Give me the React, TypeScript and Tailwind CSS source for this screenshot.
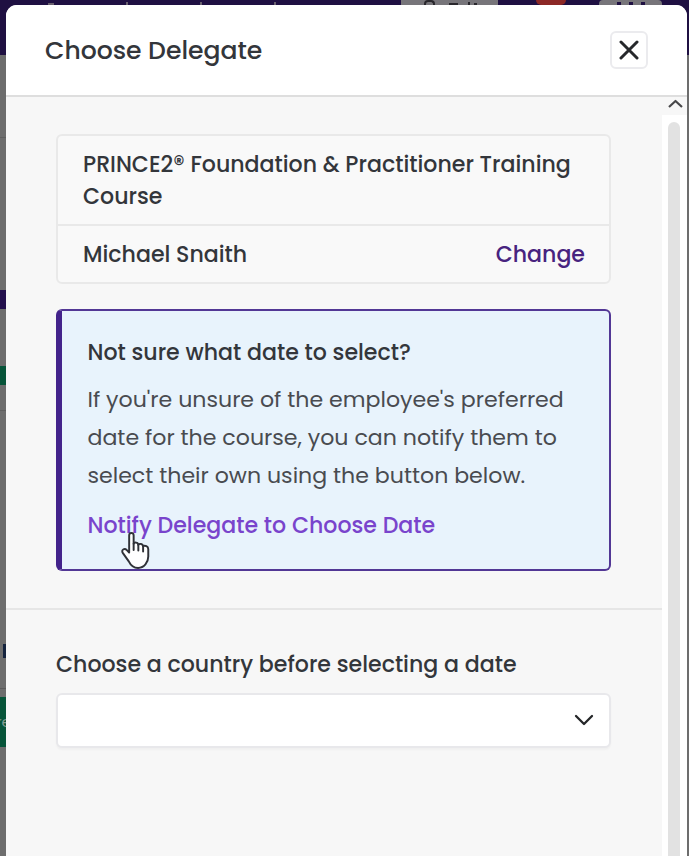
import type { ReactNode } from "react";

function Backdrop() {
  return (
    <div className="h-full w-full bg-[#6d6d6d]">
      <div className="flex h-[55px] items-start overflow-hidden bg-[#1f1042]">
        <div className="ml-[48px] flex h-[5px] w-[298px] items-end gap-[72px]">
          <span className="h-[2px] w-[6px] bg-[#69606f]" />
          <span className="h-[3px] w-[2px] bg-[#69606f]" />
          <span className="h-[3px] w-[2px] bg-[#69606f]" />
          <span className="h-[3px] w-[2px] bg-[#69606f]" />
        </div>
        <div className="ml-[55px] flex h-[5px] w-[97px] items-start bg-[#77757a] pl-[23px]">
          <span className="h-[5px] w-[11px] rounded-t border-2 border-b-0 border-[#29272c]" />
          <span className="mt-[3px] ml-[14px] h-[2px] w-[9px] bg-[#29272c]" />
          <span className="mt-[2px] ml-[10px] h-[3px] w-[2px] bg-[#29272c]" />
          <span className="mt-[3px] ml-[4px] h-[2px] w-[3px] bg-[#29272c]" />
        </div>
        <div className="ml-[38px] h-[5px] w-[30px] rounded-b-full bg-[#8c2826]" />
        <div className="ml-[33px] flex h-[5px] w-[63px] justify-center gap-[8px] rounded-t bg-[#77757a] pt-[2px]">
          <span className="w-[4px] bg-[#1f1042]" />
          <span className="w-[4px] bg-[#1f1042]" />
          <span className="w-[4px] bg-[#1f1042]" />
        </div>
      </div>
      <div className="w-[12px]">
        <div className="h-[83px] border-b border-[#5f5f5f]" />
        <div className="h-[152px]" />
        <div className="h-[19px] bg-[#23104d]" />
        <div className="h-[57px]" />
        <div className="h-[19px] bg-[#065439]" />
        <div className="h-[26px] border-b border-[#5f5f5f]" />
        <div className="h-[233px]" />
        <div className="ml-[3px] h-[14px] w-[8px] bg-[#14233e]" />
        <div className="h-[31px] border-b border-[#5b5b5b]" />
        <div className="h-[8px]" />
        <div className="flex h-[50px] items-center bg-[#065439] font-['Poppins','Inter',sans-serif] text-[15px] text-[#829b90]">
          <span className="-ml-[4px]">re</span>
        </div>
      </div>
    </div>
  );
}

function Line({ className = "", children }: { className?: string; children: ReactNode }) {
  return <span className={`block w-max whitespace-nowrap ${className}`}>{children}</span>;
}

function PointerCursor() {
  return (
    <svg className="absolute left-[120px] top-[531px] h-[39px] w-[31px]" viewBox="0 0 31 40" fill="none">
      <path
        d="M9 22V4.5c0-3.3 4.6-3.3 4.6 0v8.7c.5-2 4.7-1.7 4.8 1 1-1.7 4.8-1.1 4.9 1.4 2-1.2 5.3.1 5.3 3v7.6c0 6-4.3 11.7-10.4 11.7-5.1 0-7.6-2.7-9.6-6.8l-6-8.4c-2.4-3.6 1.8-5.3 4-3.1L9 22Z"
        fill="#fff"
        stroke="#303238"
        strokeWidth="2"
        strokeLinejoin="round"
      />
      <path d="M13.6 13v6.5M18.4 14v6M23.3 15.7V21" stroke="#303238" strokeWidth="2" strokeLinecap="round" />
    </svg>
  );
}

export default function App() {
  return (
    <div className="relative h-[856px] w-[689px] overflow-hidden font-['Poppins','Inter',sans-serif] text-[#33363b]">
      <Backdrop />
      <section className="absolute inset-y-0 left-[6px] top-[5px] flex w-[681px] flex-col overflow-hidden rounded-t-[11px] bg-[#f7f7f7]">
        <header className="flex h-[92px] shrink-0 items-center justify-between border-b-2 border-[#dedede] bg-white pl-[39px] pr-[39px]">
          <h1 className="pt-[1px] text-[25.1px] font-medium leading-[36px]">
            <Line>Choose Delegate</Line>
          </h1>
          <button aria-label="Close" className="flex size-[38px] items-center justify-center rounded-[6px] border-2 border-[#ebebee] bg-white">
            <svg viewBox="0 0 20 20" className="size-[20px]" fill="none" stroke="#26282b" strokeWidth="3" strokeLinecap="round">
              <path d="m2 2 16 16M18 2 2 18" />
            </svg>
          </button>
        </header>
        <div className="flex min-h-0 flex-1">
          <main className="w-[656px] shrink-0">
            <div className="h-[513px] border-b-2 border-[#e6e6e6] pl-[50px] pr-[50px] pt-[37px]">
              <div className="h-[150px] w-[555px] rounded-[6px] border-2 border-[#e9e9e9] bg-[#f9f9f9] text-[22.1px] font-medium">
                <div className="h-[90px] border-b-2 border-[#e9e9e9] pl-[25px] pt-[13px] leading-[32px]">
                  <Line>PRINCE2® Foundation &amp; Practitioner Training</Line>
                  <Line>Course</Line>
                </div>
                <div className="flex h-[56px] items-center justify-between pl-[25px] pr-[24px] pt-[2px]">
                  <Line>Michael Snaith</Line>
                  <button className="text-[#47237f]">
                    <Line>Change</Line>
                  </button>
                </div>
              </div>
              <div className="mt-[25px] h-[262px] w-[555px] rounded-[6px] border-2 border-l-[6px] border-[#523795] border-l-[#43238b] bg-[#e8f3fc] pl-[25.5px] pt-[24px]">
                <h2 className="text-[22.1px] font-medium leading-[36px]">
                  <Line>Not sure what date to select?</Line>
                </h2>
                <div className="pt-[10px] text-[22.1px] leading-[38px] text-[#494b50]">
                  <Line>If you're unsure of the employee's preferred</Line>
                  <Line>date for the course, you can notify them to</Line>
                  <Line>select their own using the button below.</Line>
                </div>
                <button className="pt-[13px] text-[22.1px] font-medium leading-[36px] text-[#7944cc]">
                  <Line>Notify Delegate to Choose Date</Line>
                </button>
              </div>
            </div>
            <div className="pl-[50px] pt-[37px]">
              <label className="block text-[22.1px] font-medium leading-[36px]">
                <Line>Choose a country before selecting a date</Line>
              </label>
              <button aria-label="Country" className="mt-[10px] flex h-[55px] w-[555px] items-center justify-end rounded-[6px] border-2 border-[#e8e8eb] bg-white pr-[15px] shadow-[0_2px_2px_#00000008]">
                <svg viewBox="0 0 20 12" className="-mt-[1px] h-[12px] w-[20px]" fill="none" stroke="#242628" strokeWidth="2.3" strokeLinecap="round" strokeLinejoin="round">
                  <path d="m2 2 8 8 8-8" />
                </svg>
              </button>
            </div>
          </main>
          <aside className="flex w-[25px] flex-col items-end">
            <div className="flex h-[18px] w-[25px] items-start pl-[6px] pt-[2px]">
              <svg viewBox="0 0 15 9" className="h-[9px] w-[15px]" fill="none" stroke="#48484a" strokeWidth="2.2" strokeLinejoin="round">
                <path d="m1 8 6.5-6L14 8" />
              </svg>
            </div>
            <div className="flex w-[25px] flex-1 justify-center bg-white pr-[1px] pt-[7px]">
              <div className="w-[12px] rounded-t-full bg-[#e2e2e2]" />
            </div>
          </aside>
        </div>
      </section>
      <PointerCursor />
    </div>
  );
}
